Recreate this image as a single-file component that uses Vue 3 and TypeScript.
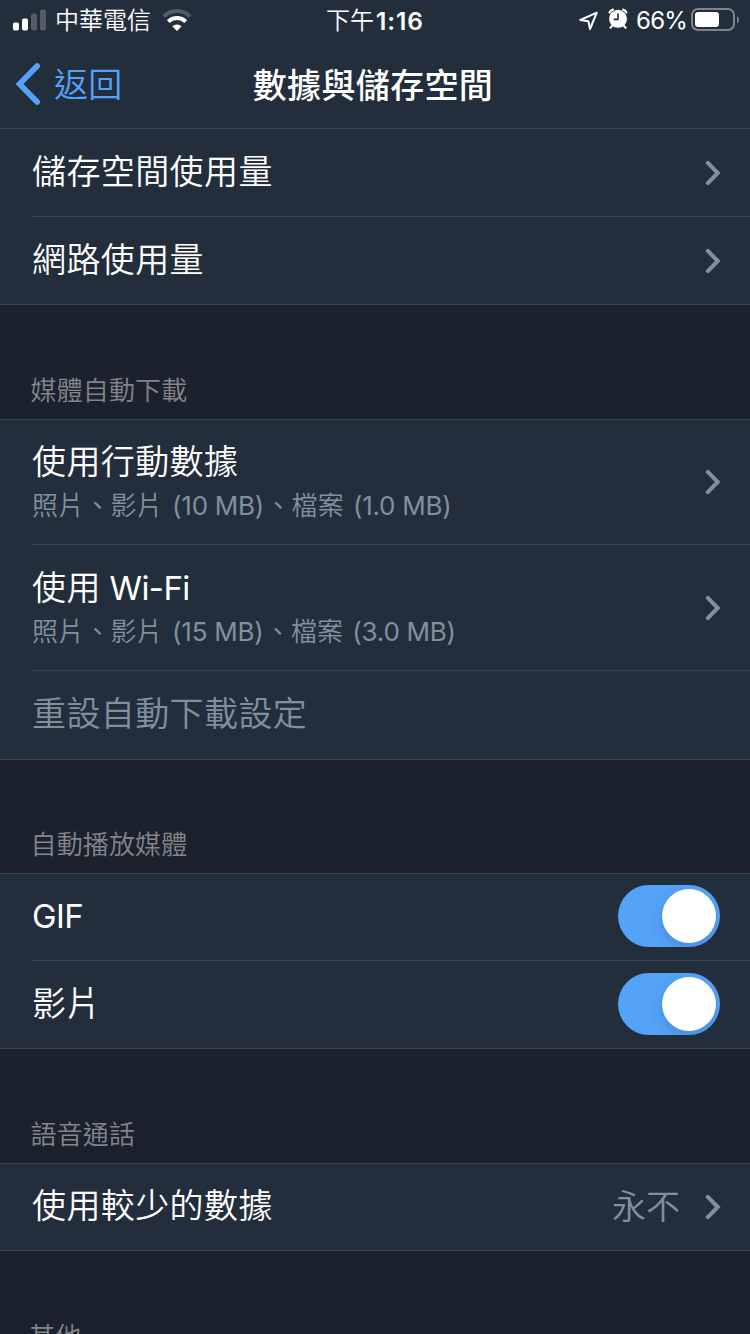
<script setup lang="ts">
interface Row {
  title: string
  detail?: string
  value?: string
  kind: 'link' | 'toggle' | 'action'
}
interface Section {
  header?: string
  rows: Row[]
}
interface Run {
  text: string
  latin: boolean
}

const sections: Section[] = [
  {
    rows: [
      { title: '儲存空間使用量', kind: 'link' },
      { title: '網路使用量', kind: 'link' },
    ],
  },
  {
    header: '媒體自動下載',
    rows: [
      { title: '使用行動數據', detail: '照片、影片 (10 MB)、檔案 (1.0 MB)', kind: 'link' },
      { title: '使用 Wi-Fi', detail: '照片、影片 (15 MB)、檔案 (3.0 MB)', kind: 'link' },
      { title: '重設自動下載設定', kind: 'action' },
    ],
  },
  {
    header: '自動播放媒體',
    rows: [
      { title: 'GIF', kind: 'toggle' },
      { title: '影片', kind: 'toggle' },
    ],
  },
  {
    header: '語音通話',
    rows: [{ title: '使用較少的數據', value: '永不', kind: 'link' }],
  },
  { header: '其他', rows: [] },
]

// Latin and CJK runs carry different weights and tracking.
function runs(text: string): Run[] {
  return text
    .split(/([\x20-\x7e]+)/)
    .filter((t) => t.length > 0)
    .map((t) => ({ text: t, latin: /^[\x20-\x7e]/.test(t) }))
}
</script>

<template>
  <div class="screen" lang="zh-Hant">
    <header class="top">
      <div class="status">
        <div class="status-left">
          <svg class="signal" width="34" height="22" viewBox="0 0 34 22" fill="#fff">
            <rect x="0" y="13.5" width="6" height="8" rx="1.8" />
            <rect x="9" y="9.5" width="6" height="12" rx="1.8" />
            <g opacity=".22">
              <rect x="18" y="4.5" width="6" height="17" rx="1.8" />
              <rect x="27" y="0.5" width="6" height="21" rx="1.8" />
            </g>
          </svg>
          <span class="carrier">中華電信</span>
          <svg class="wifi" width="30" height="22" viewBox="0 0 30 22" fill="none" stroke="#fff">
            <path d="M1.8 7.4A18.8 18.8 0 0 1 28.2 7.4" stroke-width="4" opacity=".22" />
            <path d="M6.3 12.6A12.4 12.4 0 0 1 23.7 12.6" stroke-width="3.9" />
            <path d="M10.3 17.3A7 7 0 0 1 19.7 17.3L15 22Z" fill="#fff" stroke="none" />
          </svg>
        </div>
        <div class="clock"><span>下午</span><b>1:16</b></div>
        <div class="status-right">
          <svg class="location" width="20" height="20" viewBox="0 0 20 20" fill="none" stroke="#fff" stroke-width="2" stroke-linejoin="round">
            <path d="M1.3 9L17.8 1.7L11 18L9.4 10.2Z" />
          </svg>
          <svg class="alarm" width="20" height="22" viewBox="0 0 20 22">
            <g stroke="#fff" stroke-width="2.2" stroke-linecap="round" fill="none">
              <path d="M1.5 4.6A5 5 0 0 1 5 1.6M15 1.6A5 5 0 0 1 18.5 4.6M4 18L2.4 19.8M16 18L17.6 19.8" />
            </g>
            <circle cx="10" cy="10.8" r="9" fill="#fff" />
            <path d="M10 5.5V11.4H5.6" fill="none" stroke="#232e3c" stroke-width="1.6" />
          </svg>
          <span class="percent">66%</span>
          <svg class="battery" width="49" height="24" viewBox="0 0 49 24">
            <rect x="1" y="1" width="42" height="21" rx="6" fill="none" stroke="#fff" stroke-opacity=".42" stroke-width="2" />
            <path d="M46 8A4.5 4.5 0 0 1 46 15.5Z" fill="#fff" opacity=".42" />
            <rect x="4" y="4" width="24" height="15" rx="3.2" fill="#fff" />
          </svg>
        </div>
      </div>
      <nav class="nav">
        <a class="back">
          <svg width="26" height="44" viewBox="0 0 26 44" fill="none" stroke="#54a3f9" stroke-width="5.6" stroke-linecap="round" stroke-linejoin="miter">
            <path d="M22.2 4L4.5 22L22.2 40" />
          </svg>
          <span>返回</span>
        </a>
        <h1>數據與儲存空間</h1>
        <span></span>
      </nav>
    </header>

    <section v-for="(section, i) in sections" :key="i" :class="{ first: !section.header, second: i === 2, last: !section.rows.length }">
      <h2 v-if="section.header"><span>{{ section.header }}</span></h2>
      <div v-if="section.rows.length" class="group">
        <div v-for="row in section.rows" :key="row.title" class="row" :class="[row.kind, { tall: row.detail }]">
          <div class="texts">
            <div class="title"><span v-for="(r, n) in runs(row.title)" :key="n" :class="{ latin: r.latin }">{{ r.text }}</span></div>
            <div v-if="row.detail" class="detail"><span v-for="(r, n) in runs(row.detail)" :key="n" :class="{ latin: r.latin }">{{ r.text }}</span></div>
          </div>
          <span v-if="row.value" class="value">{{ row.value }}</span>
          <svg v-if="row.kind === 'link'" class="chevron" width="16" height="26" viewBox="0 0 16 26" fill="none" stroke="#80909f" stroke-width="4" stroke-linecap="round">
            <path d="M2.8 2.9L12.8 13L2.8 23.1" />
          </svg>
          <span v-if="row.kind === 'toggle'" class="switch"><i></i></span>
        </div>
      </div>
    </section>
  </div>
</template>

<style>
body {
  background: #1b222d;
}
</style>

<style scoped>
.screen {
  box-sizing: border-box;
  width: 750px;
  height: 1334px;
  overflow: hidden;
  background: #1b222d;
  color: #fff;
  font-family: Inter, "Noto Sans CJK TC", sans-serif;
  font-weight: 350;
}
.top {
  box-sizing: border-box;
  height: 129px;
  background: #232e3c;
  border-bottom: 1px solid #364351;
}
.status {
  display: grid;
  grid-template-columns: 1fr auto 1fr;
  height: 40px;
  line-height: 42px;
  font-size: 24px;
}
.status-left,
.status-right {
  display: flex;
  align-items: flex-start;
}
.status-left { padding-left: 13px; }
.status-right { justify-content: flex-end; padding-right: 10px; }
.signal { margin-top: 8.5px; }
.carrier { margin-left: 8px; }
.wifi { margin: 9px 0 0 11px; }
.clock { display: flex; gap: 2px; }
.clock b { font-weight: 600; font-size: 24.5px; letter-spacing: .9px; }
.location { margin: 11px 9px 0 0; }
.alarm { margin: 8px 8px 0 0; }
.percent { margin-right: 4px; font-weight: 400; font-size: 24px; letter-spacing: -.8px; }
.battery { margin-top: 8px; }
.nav {
  display: grid;
  grid-template-columns: 1fr auto 1fr;
  align-items: center;
  height: 88px;
  font-size: 34px;
  letter-spacing: .35px;
  line-height: 48px;
}
.back {
  display: flex;
  align-items: center;
  gap: 13px;
  padding-left: 15px;
  color: #54a3f9;
}
.back span { padding-top: 1px; }
.nav h1 {
  margin: 0;
  padding: 3px 4px 0 0;
  font-size: 34px;
  font-weight: 500;
}
h2 {
  display: flex;
  align-items: flex-end;
  box-sizing: border-box;
  height: 114px;
  margin: 0;
  padding: 0 30.5px 10px;
  color: #83868b;
  font-size: 26px;
  font-weight: inherit;
  line-height: 36px;
  letter-spacing: .15px;
}
.second h2 { height: 113px; }
.last h2 { padding-left: 29px; }
.group {
  background: #232e3c;
  border-top: 1px solid #364351;
  border-bottom: 1px solid #364351;
}
.first .group { border-top: 0; }
.row {
  display: flex;
  align-items: center;
  box-sizing: border-box;
  height: 86px;
  margin-left: 32px;
  padding-right: 29px;
}
.first .row { height: 87px; }
.row + .row,
.first .row + .row { border-top: 1px solid #364351; height: 88px; }
.row.tall { height: 124px; }
.row.tall + .row.tall { height: 126px; }
.row.tall + .action { height: 89px; }
.texts { flex: 1; padding-bottom: 3px; }
.first .texts,
.toggle + .toggle .texts { padding-bottom: 1px; }
.row.tall .texts { padding-bottom: 0; }
.tall + .tall .texts { padding-top: 2px; }
.title {
  font-size: 34px;
  line-height: 44px;
  letter-spacing: .4px;
}
.title .latin {
  font-size: 33px;
  font-weight: 400;
  letter-spacing: -.6px;
}
.detail {
  margin-top: 3px;
  color: #80909f;
  font-size: 26px;
  line-height: 38px;
  letter-spacing: .2px;
}
.detail .latin {
  margin: 0 1.2px 0 2px;
  font-weight: 400;
  letter-spacing: -.25px;
}
.action .title, .value { color: #80909f; }
.value {
  margin-right: 25px;
  padding-bottom: 5px;
  font-size: 34px;
}
.switch {
  box-sizing: border-box;
  display: flex;
  justify-content: flex-end;
  width: 102px;
  height: 62px;
  padding: 4px;
  border-radius: 31px;
  background: #54a3f9;
  margin: 0 1px 2px 0;
  overflow: hidden;
}
.toggle + .toggle .switch { margin-bottom: 1px; }
.switch i {
  width: 54px;
  height: 54px;
  border-radius: 50%;
  background: #fff;
  box-shadow: 0 5px 14px rgba(0, 0, 0, .15);
}
</style>
